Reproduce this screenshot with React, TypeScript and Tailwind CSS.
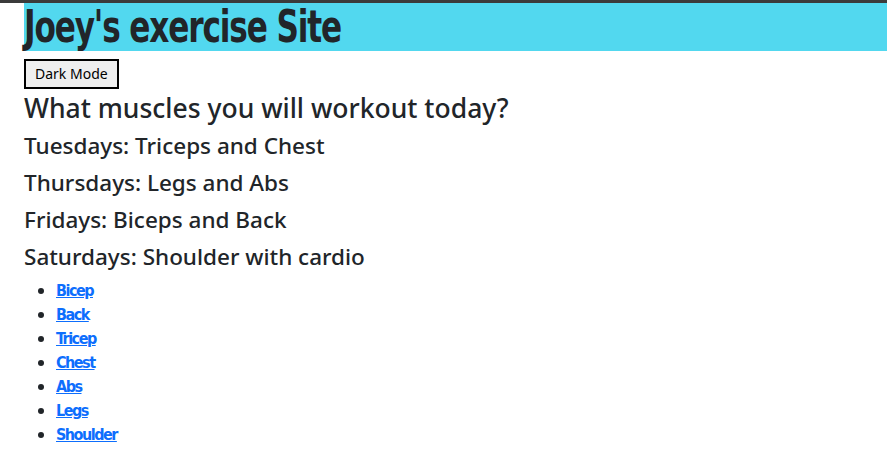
import React from "react";

const body = { fontFamily: '"Noto Sans", "Open Sans", sans-serif' };
const impact = { fontFamily: '"DejaVu Sans Condensed", "DejaVu Sans", sans-serif' };

export default function App() {
  const links = ["Bicep", "Back", "Tricep", "Chest", "Abs", "Legs", "Shoulder"];
  return (
    <div className="min-h-[450px] bg-white text-[#212529]" style={body}>
      <div className="h-[3px] bg-[#3b3b3b]" />
      <div className="pl-6">
        <div className="h-[48px] bg-[#52d8ef] flex items-center">
          <h1
            className="text-[45px] font-bold leading-[46px] tracking-[-1.5px] origin-left scale-x-[0.77] whitespace-nowrap"
            style={impact}
          >
            Joey's exercise Site
          </h1>
        </div>
        <button className="mt-[8px] h-[30px] px-[9px] bg-[#efefef] border-2 border-black text-[14px] leading-none text-black" style={body}>
          Dark Mode
        </button>
        <h2 className="text-[26.5px] leading-[36px] mt-[1px] font-medium">What muscles you will workout today?</h2>
        <div className="text-[22.5px] leading-[37px] mt-[1px] font-medium">
          <p>Tuesdays: Triceps and Chest</p>
          <p>Thursdays: Legs and Abs</p>
          <p>Fridays: Biceps and Back</p>
          <p>Saturdays: Shoulder with cardio</p>
        </div>
        <ul className="list-disc pl-8 mt-[3px]">
          {links.map((l) => (
            <li key={l} className="h-[24px] leading-[24px] text-[16px]">
              <a
                href="#"
                className="text-[#0d6efd] underline font-bold tracking-[-1.5px] leading-[24px]"
                style={impact}
              >
                {l}
              </a>
            </li>
          ))}
        </ul>
      </div>
    </div>
  );
}
